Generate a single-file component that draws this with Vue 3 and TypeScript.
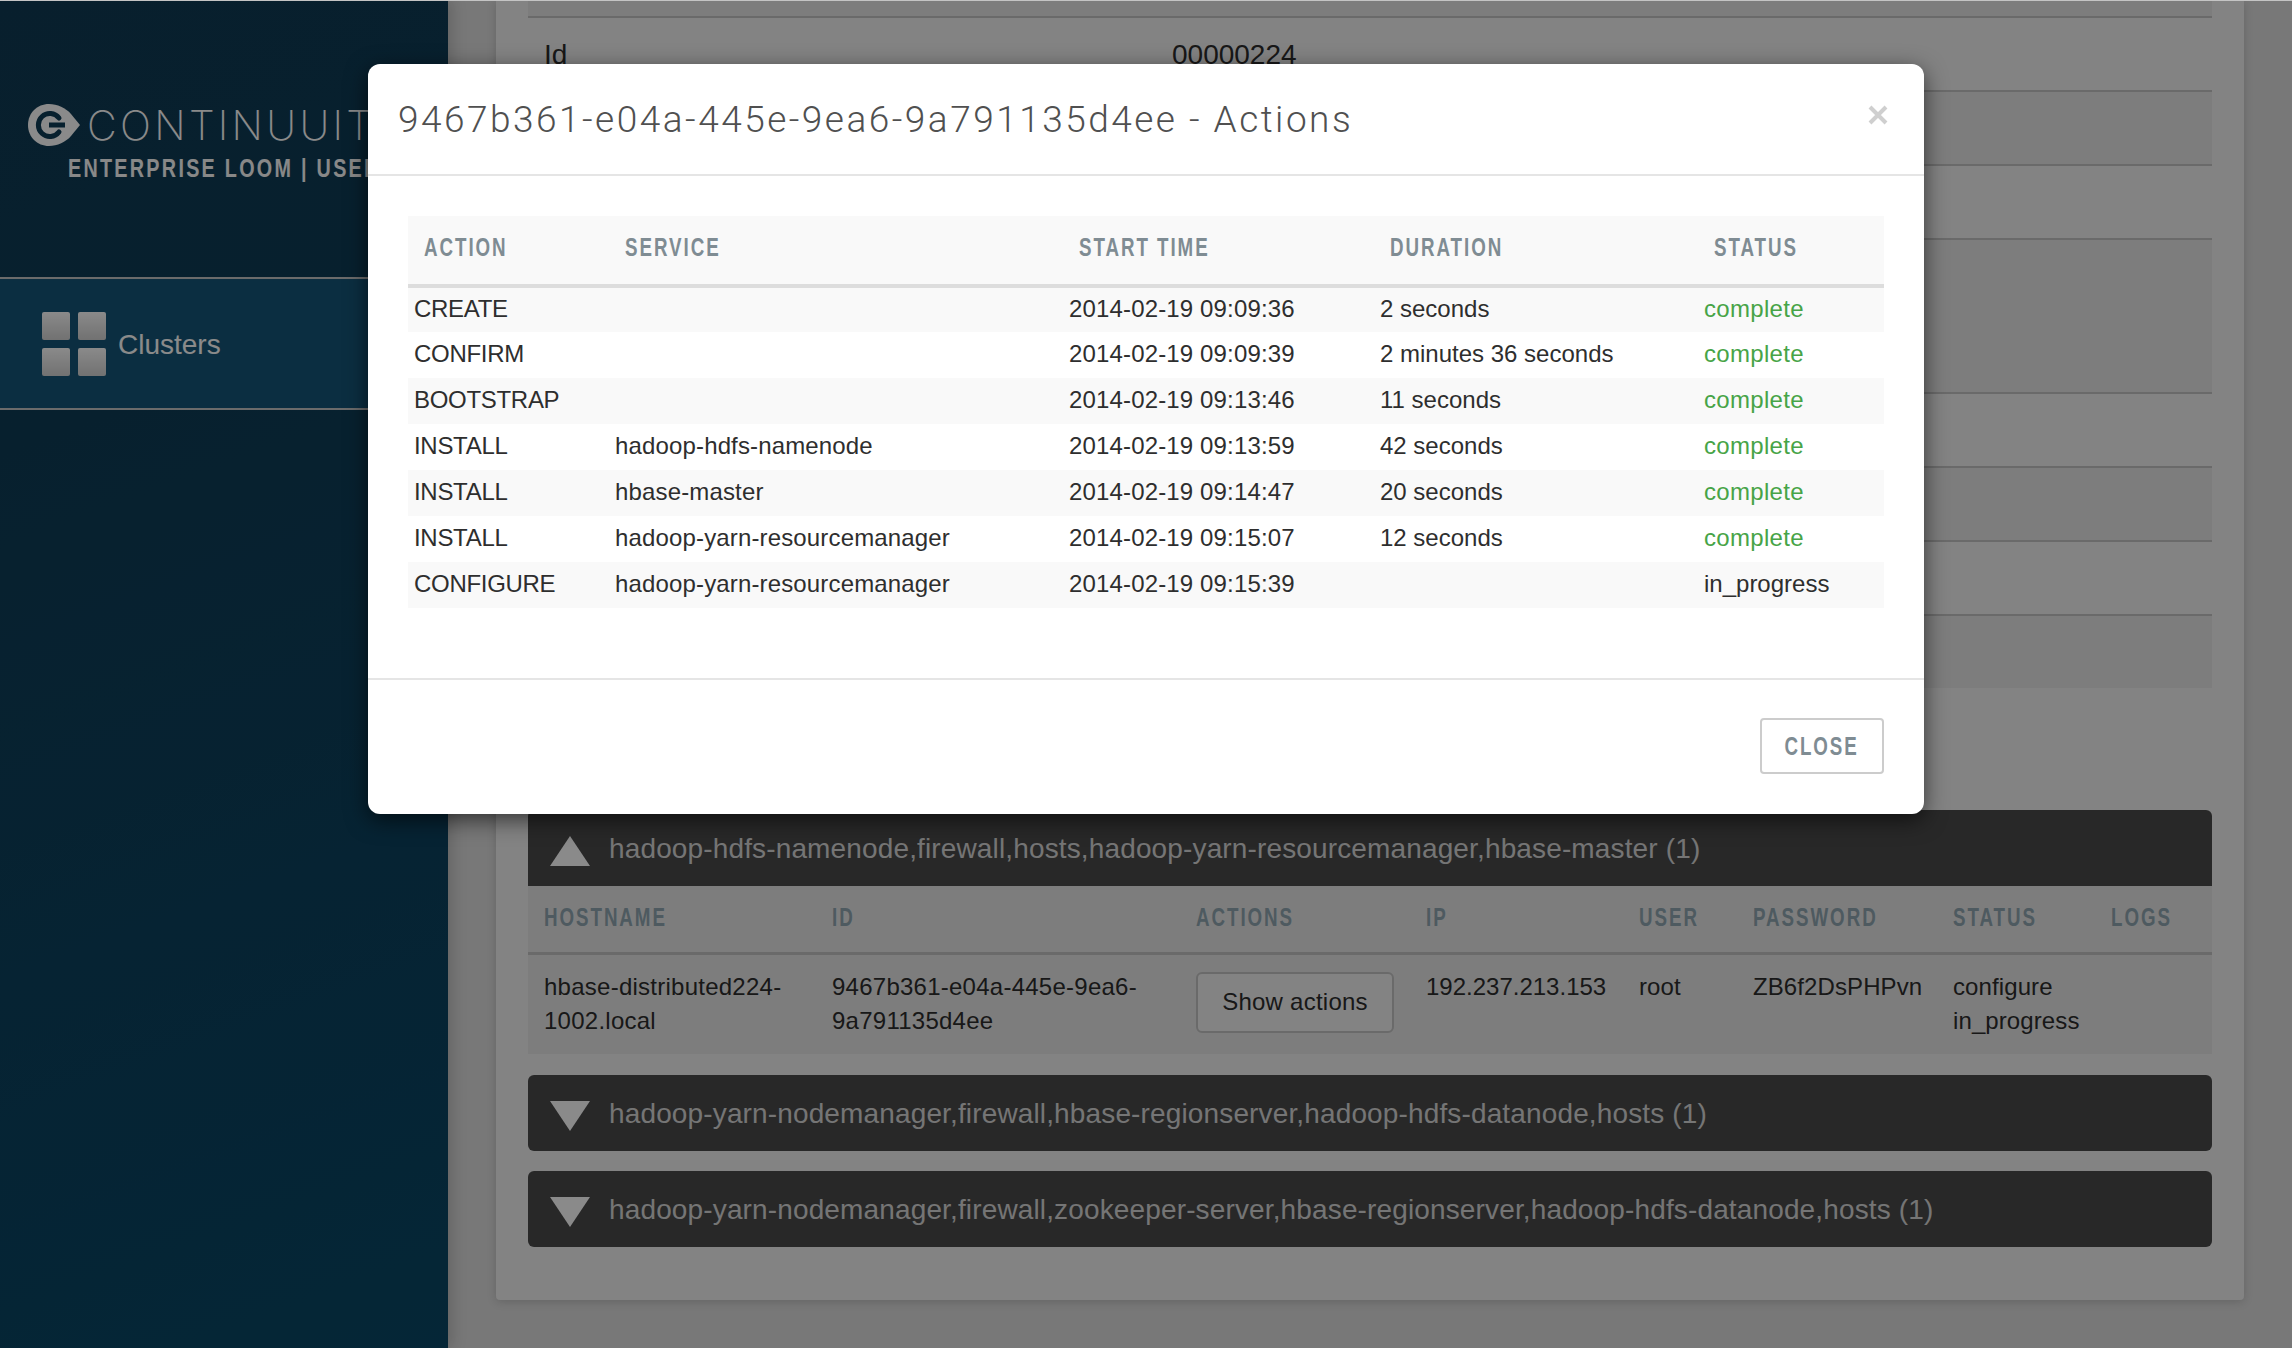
<script setup lang="ts">
interface ActionRow {
  action: string
  service: string
  start: string
  duration: string
  status: string
}

const actions: ActionRow[] = [
  { action: 'CREATE', service: '', start: '2014-02-19 09:09:36', duration: '2 seconds', status: 'complete' },
  { action: 'CONFIRM', service: '', start: '2014-02-19 09:09:39', duration: '2 minutes 36 seconds', status: 'complete' },
  { action: 'BOOTSTRAP', service: '', start: '2014-02-19 09:13:46', duration: '11 seconds', status: 'complete' },
  { action: 'INSTALL', service: 'hadoop-hdfs-namenode', start: '2014-02-19 09:13:59', duration: '42 seconds', status: 'complete' },
  { action: 'INSTALL', service: 'hbase-master', start: '2014-02-19 09:14:47', duration: '20 seconds', status: 'complete' },
  { action: 'INSTALL', service: 'hadoop-yarn-resourcemanager', start: '2014-02-19 09:15:07', duration: '12 seconds', status: 'complete' },
  { action: 'CONFIGURE', service: 'hadoop-yarn-resourcemanager', start: '2014-02-19 09:15:39', duration: '', status: 'in_progress' }
]

const actionHeads = ['Action', 'Service', 'Start time', 'Duration', 'Status']
const hostHeads = ['Hostname', 'ID', 'Actions', 'IP', 'User', 'Password', 'Status', 'Logs']
const infoRows = [
  { label: 'Id', value: '00000224', tall: false },
  { label: '', value: '', tall: false },
  { label: '', value: '', tall: false },
  { label: '', value: '', tall: true },
  { label: '', value: '', tall: false },
  { label: '', value: '', tall: false },
  { label: '', value: '', tall: false },
  { label: '', value: '', tall: false }
]
</script>

<template>
  <div class="page">
    <aside class="sidebar">
      <div class="brand">
        <div class="logo">
          <svg class="logo-mark" viewBox="0 0 52 42" aria-hidden="true">
            <path d="M21 0C29 0 38 4 43 10L52 21L43 32C38 38 29 42 21 42C9 42 0 33 0 21C0 9 9 0 21 0Z" fill="#fff" />
            <path d="M31 14A11.5 11.5 0 1 0 31 28" fill="none" stroke="#0d3b56" stroke-width="5" stroke-linecap="round" />
            <path d="M21 21H37" fill="none" stroke="#0d3b56" stroke-width="5" />
          </svg>
          <span class="wordmark">CONTINUUITY</span>
        </div>
        <div class="tagline">ENTERPRISE LOOM | USER</div>
      </div>
      <nav class="nav">
        <div class="nav-icon">
          <span></span><span></span><span></span><span></span>
        </div>
        <span class="nav-label">Clusters</span>
      </nav>
    </aside>

    <main class="main">
      <section class="card">
        <div class="info-strip"></div>
        <div v-for="(row, i) in infoRows" :key="i" class="info-row" :class="{ tall: row.tall, shaded: i % 2 === 1 }">
          <span class="info-label">{{ row.label }}</span>
          <span>{{ row.value }}</span>
        </div>

        <div class="group first">
          <span class="tri up"></span>
          <span class="group-text">hadoop-hdfs-namenode,firewall,hosts,hadoop-yarn-resourcemanager,hbase-master (1)</span>
        </div>
        <table class="hosts">
          <colgroup>
            <col class="h1" /><col class="h2" /><col class="h3" /><col class="h4" />
            <col class="h5" /><col class="h6" /><col class="h7" /><col class="h8" />
          </colgroup>
          <thead>
            <tr><th v-for="h in hostHeads" :key="h"><span class="narrow">{{ h }}</span></th></tr>
          </thead>
          <tbody>
            <tr>
              <td>hbase-distributed224-1002.local</td>
              <td>9467b361-e04a-445e-9ea6-9a791135d4ee</td>
              <td><button class="show-btn" type="button">Show actions</button></td>
              <td>192.237.213.153</td>
              <td>root</td>
              <td>ZB6f2DsPHPvn</td>
              <td>configure<br />in_progress</td>
              <td></td>
            </tr>
          </tbody>
        </table>
        <div class="group second">
          <span class="tri down"></span>
          <span class="group-text">hadoop-yarn-nodemanager,firewall,hbase-regionserver,hadoop-hdfs-datanode,hosts (1)</span>
        </div>
        <div class="group third">
          <span class="tri down"></span>
          <span class="group-text">hadoop-yarn-nodemanager,firewall,zookeeper-server,hbase-regionserver,hadoop-hdfs-datanode,hosts (1)</span>
        </div>
      </section>
    </main>

    <div class="overlay"></div>
    <div class="topline"></div>

    <div class="modal">
      <header class="modal-head">
        <h3 class="modal-title">9467b361-e04a-445e-9ea6-9a791135d4ee - Actions</h3>
        <button class="modal-x" type="button" aria-label="Close">
          <svg viewBox="0 0 20 20" width="20" height="20" aria-hidden="true">
            <path d="M2 2L18 18M18 2L2 18" stroke="#cfcfcf" stroke-width="4" fill="none" />
          </svg>
        </button>
      </header>
      <div class="modal-body">
        <table class="actions">
          <colgroup>
            <col class="a1" /><col class="a2" /><col class="a3" /><col class="a4" /><col class="a5" />
          </colgroup>
          <thead>
            <tr><th v-for="h in actionHeads" :key="h"><span class="narrow">{{ h }}</span></th></tr>
          </thead>
          <tbody>
            <tr v-for="(a, i) in actions" :key="i">
              <td class="caps">{{ a.action }}</td>
              <td>{{ a.service }}</td>
              <td>{{ a.start }}</td>
              <td class="plain">{{ a.duration }}</td>
              <td class="plain" :class="{ ok: a.status === 'complete' }">{{ a.status }}</td>
            </tr>
          </tbody>
        </table>
      </div>
      <footer class="modal-foot">
        <button class="close-btn" type="button"><span class="narrow centered">CLOSE</span></button>
      </footer>
    </div>
  </div>
</template>

<style>
html, body { margin: 0; padding: 0; background: #dedede; }
</style>

<style scoped>
.page {
  position: relative;
  display: flex;
  width: 2292px;
  height: 1348px;
  overflow: hidden;
  background: #dedede;
  font-family: "Liberation Sans", Arial, sans-serif;
  font-size: 24px;
  line-height: 34px;
  color: #2e2e2e;
}
.sidebar {
  flex: 0 0 448px;
  width: 448px;
  min-width: 0;
  background: linear-gradient(160deg, #0f3a54 0%, #0e3c56 30%, #0a4766 100%);
  box-shadow: 4px 0 14px rgba(0, 0, 0, 0.18);
  z-index: 1;
}
.brand {
  height: 277px;
  box-sizing: border-box;
  padding: 104px 0 0 28px;
  white-space: nowrap;
}
.logo {
  display: flex;
  align-items: center;
  gap: 7px;
  height: 42px;
}
.logo-mark { width: 52px; height: 42px; flex: none; }
.wordmark {
  font-family: Inter, sans-serif;
  font-weight: 200;
  font-size: 41px;
  letter-spacing: 3.3px;
  color: #fff;
  line-height: 42px;
}
.tagline {
  display: inline-block;
  margin: 5px 0 0 40px;
  font-weight: 700;
  font-size: 26px;
  line-height: 34px;
  letter-spacing: 3px;
  color: #fbfbfb;
  transform: scaleX(0.76);
  transform-origin: left center;
}
.nav {
  box-sizing: border-box;
  height: 133px;
  display: flex;
  align-items: center;
  gap: 12px;
  padding-left: 42px;
  border-top: 2px solid #c6c6c6;
  border-bottom: 2px solid #c6c6c6;
  background: #155678;
}
.nav-icon {
  display: grid;
  grid-template-columns: 28px 28px;
  grid-template-rows: 28px 28px;
  gap: 8px;
}
.nav-icon span {
  border-radius: 2px;
  background: linear-gradient(#fff, #d2d2d2);
}
.nav-label { padding-top: 2px; font-size: 28px; color: #fff; }

.main { flex: 1; min-width: 0; padding: 0 48px; }
.card {
  height: 1300px;
  box-sizing: border-box;
  padding: 0 32px;
  background: #f2f2f2;
  border-radius: 0 0 4px 4px;
  box-shadow: 0 2px 10px rgba(0, 0, 0, 0.16);
}
.info-strip { height: 16px; background: #e8e8e8; }
.info-row {
  box-sizing: border-box;
  height: 74px;
  display: flex;
  align-items: center;
  padding: 1px 0 0 16px;
  border-top: 2px solid #c4c4c4;
  font-size: 28px;
}
.info-row.tall { height: 154px; }
.info-row.shaded { background: #e8e8e8; }
.info-label { width: 628px; }

.group {
  box-sizing: border-box;
  height: 76px;
  display: flex;
  align-items: center;
  gap: 19px;
  padding-left: 22px;
  border-radius: 6px;
  background: #4a4a4a;
  color: #d8d8d8;
  font-size: 28px;
  letter-spacing: 0.14px;
  white-space: nowrap;
}
.group-text { position: relative; top: 1px; }
.group.first { margin-top: 122px; border-radius: 6px 6px 0 0; }
.group.second { margin-top: 21px; }
.group.third { margin-top: 20px; }
.tri {
  width: 0;
  height: 0;
  border-left: 20px solid transparent;
  border-right: 20px solid transparent;
}
.tri.up { border-bottom: 30px solid #fff; margin-top: 6px; }
.tri.down { border-top: 30px solid #fff; margin-top: 6px; }

table { border-collapse: collapse; table-layout: fixed; }
th {
  font-weight: 700;
  font-size: 25px;
  text-align: left;
  text-transform: uppercase;
  white-space: nowrap;
}
.narrow {
  display: inline-block;
  letter-spacing: 2.6px;
  transform: scaleX(0.75);
  transform-origin: left center;
}
.narrow.centered { transform-origin: center; }
.hosts { width: 1684px; background: #e8e8e8; }
.h1 { width: 288px; } .h2 { width: 364px; } .h3 { width: 230px; } .h4 { width: 213px; }
.h5 { width: 114px; } .h6 { width: 200px; } .h7 { width: 158px; } .h8 { width: 117px; }
.hosts th {
  height: 67px;
  padding: 0 0 4px 16px;
  box-sizing: border-box;
  color: #90a7b2;
  border-bottom: 3px solid #c4c4c4;
}
.hosts td {
  padding: 15px 0 16px 16px;
  vertical-align: top;
  letter-spacing: 0.1px;
  color: #2e2e2e;
}
.hosts td:nth-child(1), .hosts td:nth-child(2) { padding-right: 30px; letter-spacing: 0.25px; }
.hosts td:nth-child(4) { letter-spacing: 0; }
.show-btn {
  display: block;
  box-sizing: border-box;
  width: 198px;
  height: 61px;
  margin: 2px 0 -21px;
  padding: 0;
  border: 2px solid #c4c4c4;
  border-radius: 6px;
  background: #f2f2f2;
  color: #2e2e2e;
  font: inherit;
  letter-spacing: 0.25px;
}

.overlay {
  position: absolute;
  inset: 0;
  z-index: 2;
  background: rgba(0, 0, 0, 0.46);
}
.topline {
  position: absolute;
  top: 0;
  left: 0;
  right: 0;
  height: 1px;
  z-index: 3;
  background: #c4c4c4;
}
.modal {
  position: absolute;
  z-index: 4;
  top: 64px;
  left: 368px;
  width: 1556px;
  height: 750px;
  display: flex;
  flex-direction: column;
  background: #fff;
  border-radius: 12px;
  box-shadow: 0 6px 22px rgba(0, 0, 0, 0.6);
}
.modal-head {
  flex: none;
  height: 112px;
  box-sizing: border-box;
  display: flex;
  justify-content: space-between;
  padding: 0 36px 0 30px;
  border-bottom: 2px solid #e5e5e5;
}
.modal-title {
  margin: 32px 0 0;
  font-family: Roboto, sans-serif;
  font-weight: 300;
  font-size: 37px;
  line-height: 48px;
  letter-spacing: 2.48px;
  color: #505050;
}
.modal-x {
  align-self: flex-start;
  margin-top: 41px;
  padding: 0;
  border: 0;
  background: none;
  width: 20px;
  height: 20px;
}
.modal-body {
  flex: 1;
  padding: 40px 40px 0;
}
.actions { width: 1476px; }
.a1 { width: 201px; } .a2 { width: 454px; } .a3 { width: 311px; } .a4 { width: 324px; } .a5 { width: 186px; }
.actions th {
  height: 70px;
  box-sizing: border-box;
  padding: 0 0 6px 16px;
  background: #f9f9f9;
  color: #7f8c93;
  border-bottom: 4px solid #ddd;
}
.actions td {
  height: 46px;
  box-sizing: border-box;
  padding: 0 0 3px 6px;
  white-space: nowrap;
  letter-spacing: 0.15px;
}
.actions td.caps { letter-spacing: -0.3px; }
.actions td.plain { letter-spacing: 0; }
.actions tbody tr:nth-child(odd) { background: #f9f9f9; }
.actions td.ok { color: #47a447; letter-spacing: 0.3px; }
.modal-foot {
  flex: none;
  height: 136px;
  box-sizing: border-box;
  padding: 38px 40px 0;
  display: flex;
  justify-content: flex-end;
  align-items: flex-start;
  border-top: 2px solid #e5e5e5;
}
.close-btn {
  box-sizing: border-box;
  width: 124px;
  height: 56px;
  padding: 0;
  border: 2px solid #ccc;
  border-radius: 4px;
  background: #fff;
  color: #7f8c93;
  font-family: inherit;
  font-weight: 700;
  font-size: 25px;
}
</style>
